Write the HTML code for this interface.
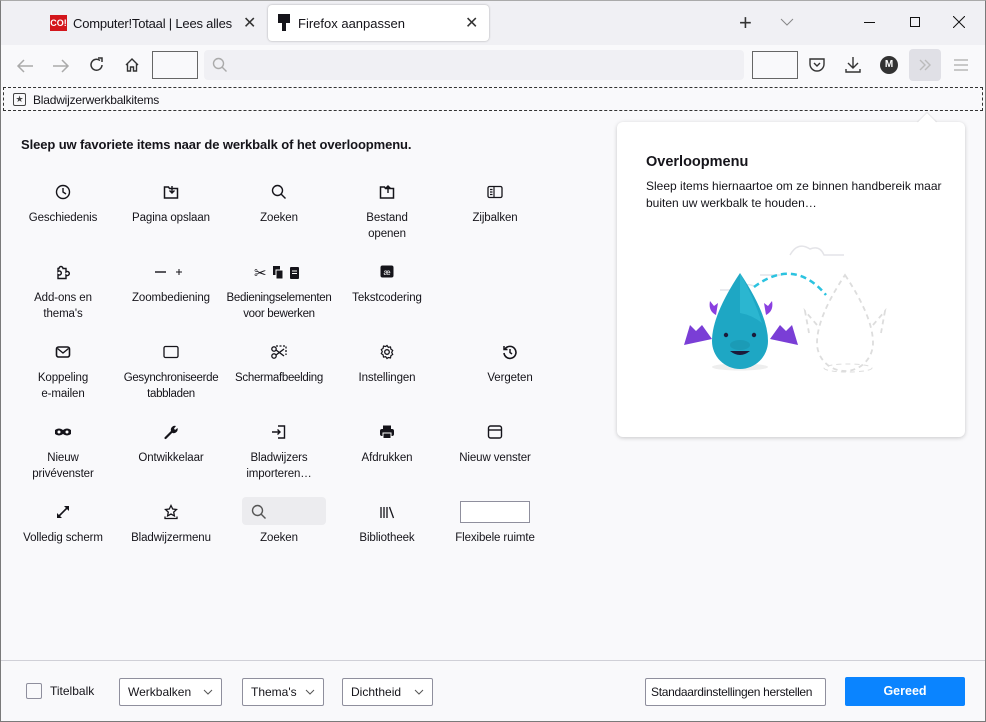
<!DOCTYPE html>
<html><head><meta charset="utf-8">
<style>
*{box-sizing:border-box;margin:0;padding:0}
body{width:986px;height:722px;overflow:hidden;font-family:"Liberation Sans",sans-serif;font-size:12px;color:#15141a;background:#f9f9fb;position:relative}
.abs{position:absolute}
.frame{position:absolute;left:0;top:0;width:986px;height:722px;border:1px solid #7a7a7a;border-top:1px solid #aaa;pointer-events:none}
.tabs{left:0;top:0;width:986px;height:45px;background:#f0f0f4}
.tb{left:0;top:45px;width:986px;height:43px;background:#f9f9fb}
.item{position:absolute;width:108px;text-align:center;line-height:16px;font-size:11.5px;letter-spacing:-0.1px}
.item svg{display:block;margin:0 auto 10px auto}
.btn{position:absolute;top:678px;height:28px;border:1px solid #8f8f9d;background:#fff;border-radius:2px;font-size:12px;line-height:26px;padding-left:8px}
.btn svg{position:absolute;right:8px;top:10px}
</style></head><body>
<div class="abs tabs"></div>
<div class="abs" style="left:50px;top:15px;width:17px;height:16px;background:#d3161c;color:#fff;font-size:9px;font-weight:bold;line-height:16px;text-align:center">CO!</div>
<div class="abs" style="left:73px;top:16px;font-size:13px;width:162px;white-space:nowrap;overflow:hidden;letter-spacing:-0.2px">Computer!Totaal | Lees alles op</div>
<div class="abs" style="left:243px;top:13px;font-size:16px;color:#333">✕</div>
<div class="abs" style="left:268px;top:5px;width:221px;height:36px;background:#fff;border-radius:4px;box-shadow:0 0 2px rgba(0,0,0,.3)"></div>
<svg class="abs" style="left:277px;top:14px" width="14" height="18" viewBox="0 0 14 18"><rect x="1" y="0" width="12" height="9" fill="#15141a"/><rect x="5" y="9" width="4" height="8" fill="#15141a"/></svg>
<div class="abs" style="left:298px;top:16px;font-size:13px">Firefox aanpassen</div>
<div class="abs" style="left:465px;top:13px;font-size:16px;color:#333">✕</div>
<div class="abs" style="left:739px;top:10px;font-size:22px;color:#333;font-weight:300">+</div>
<svg class="abs" style="left:780px;top:18px" width="14" height="8"><path d="M1 1l6 6 6-6" stroke="#888" fill="none"/></svg>
<div class="abs" style="left:864px;top:22px;width:11px;height:1px;background:#111"></div>
<div class="abs" style="left:910px;top:17px;width:10px;height:10px;border:1px solid #111"></div>
<svg class="abs" style="left:953px;top:16px" width="12" height="12"><path d="M0 0l12 12M12 0L0 12" stroke="#111"/></svg>
<div class="abs tb"></div>
<svg class="abs" style="left:16px;top:58px" width="18" height="16"><path d="M17 8H2M8 2L2 8l6 6" stroke="#aaa" stroke-width="1.5" fill="none"/></svg>
<svg class="abs" style="left:52px;top:58px" width="18" height="16"><path d="M1 8h15M10 2l6 6-6 6" stroke="#aaa" stroke-width="1.5" fill="none"/></svg>
<svg class="abs" style="left:89px;top:57px" width="16" height="16"><path d="M13 8A5.5 5.5 0 1 1 11 3.5" stroke="#333" stroke-width="1.5" fill="none"/><path d="M9 1h4v4" stroke="#333" stroke-width="1.5" fill="none"/></svg>
<svg class="abs" style="left:124px;top:57px" width="16" height="16"><path d="M2 8L8 2l6 6M3.5 7v7h3v-4h3v4h3V7" stroke="#333" stroke-width="1.4" fill="none"/></svg>
<div class="abs" style="left:152px;top:51px;width:46px;height:28px;border:1px solid #666;background:#f9f9fb"></div>
<div class="abs" style="left:204px;top:50px;width:540px;height:30px;background:#f0f0f4;border-radius:4px"></div>
<svg class="abs" style="left:212px;top:57px" width="16" height="16"><circle cx="6.5" cy="6.5" r="5" stroke="#aaa" stroke-width="1.4" fill="none"/><path d="M10 10l4.5 4.5" stroke="#aaa" stroke-width="1.4"/></svg>
<div class="abs" style="left:752px;top:51px;width:46px;height:28px;border:1px solid #666;background:#f9f9fb"></div>
<svg class="abs" style="left:808px;top:57px" width="18" height="16"><path d="M2 2h14v5a7 7 0 0 1-14 0z" stroke="#333" stroke-width="1.4" fill="none"/><path d="M6 6l3 3 3-3" stroke="#333" stroke-width="1.4" fill="none"/></svg>
<svg class="abs" style="left:845px;top:56px" width="16" height="18"><path d="M8 1v11M3 7l5 5 5-5M1 13v3h14v-3" stroke="#333" stroke-width="1.4" fill="none"/></svg>
<div class="abs" style="left:880px;top:56px;width:18px;height:18px;border-radius:50%;background:#333;color:#fff;font-size:10px;font-weight:bold;text-align:center;line-height:18px">M</div>
<div class="abs" style="left:909px;top:49px;width:32px;height:32px;background:#e0e0e6;border-radius:4px"></div>
<svg class="abs" style="left:918px;top:59px" width="14" height="12"><path d="M2 1l5 5-5 5M7 1l5 5-5 5" stroke="#bbb" stroke-width="1.4" fill="none"/></svg>
<svg class="abs" style="left:954px;top:58px" width="14" height="14"><path d="M0 2h14M0 7h14M0 12h14" stroke="#aaa" stroke-width="1.2"/></svg>
<div class="abs" style="left:3px;top:87px;width:980px;height:24px;border:1px dashed #333;background:#f9f9fb"></div>
<div class="abs" style="left:13px;top:93px;width:13px;height:13px;border:1.4px solid #444;border-radius:2px;font-size:9px;line-height:10px;text-align:center;color:#444">★</div>
<div class="abs" style="left:33px;top:93px;font-size:12px;letter-spacing:-0.2px">Bladwijzerwerkbalkitems</div>
<div class="abs" style="left:21px;top:137px;font-size:13px;font-weight:bold;color:#15141a;letter-spacing:-0.1px">Sleep uw favoriete items naar de werkbalk of het overloopmenu.</div>

<div class="item" style="left:9px;top:184px"><svg width="16" height="16"><circle cx="8" cy="8" r="6.5" stroke="#15141a" stroke-width="1.4" fill="none"/><path d="M8 4v4l3 2" stroke="#15141a" stroke-width="1.4" fill="none"/></svg>Geschiedenis</div>
<div class="item" style="left:117px;top:184px"><svg width="16" height="16"><path d="M1.5 3h4l1 1.5h8v9.5h-13z" stroke="#15141a" stroke-width="1.5" fill="none"/><path d="M9 2v7M6.5 6.5L9 9l2.5-2.5" stroke="#15141a" stroke-width="1.4" fill="none"/></svg>Pagina opslaan</div>
<div class="item" style="left:225px;top:184px"><svg width="16" height="16"><circle cx="6.5" cy="6.5" r="5" stroke="#15141a" stroke-width="1.4" fill="none"/><path d="M10 10l4.5 4.5" stroke="#15141a" stroke-width="1.4"/></svg>Zoeken</div>
<div class="item" style="left:333px;top:184px"><svg width="16" height="16"><path d="M1.5 3h4l1 1.5h8v9.5h-13z" stroke="#15141a" stroke-width="1.5" fill="none"/><path d="M9 9V2M6.5 4.5L9 2l2.5 2.5" stroke="#15141a" stroke-width="1.4" fill="none"/></svg>Bestand<br>openen</div>
<div class="item" style="left:441px;top:184px"><svg width="16" height="16"><rect x="1" y="2.5" width="14" height="11" rx="1.5" stroke="#15141a" stroke-width="1.3" fill="none"/><path d="M7 3v10M3 5.5h2.5M3 8h2.5M3 10.5h2.5" stroke="#15141a" stroke-width="1.2"/></svg>Zijbalken</div>
<div class="item" style="left:9px;top:264px"><svg width="16" height="16"><path d="M3 14.5h8V11a2 2 0 1 0 0-3V4.5H8a2 2 0 1 0-4 0H3v3a2 2 0 1 1 0 3z" stroke="#15141a" stroke-width="1.4" fill="none"/></svg>Add-ons en<br>thema's</div>
<div class="item" style="left:117px;top:264px"><svg width="40" height="16"><path d="M4 8h11" stroke="#15141a" stroke-width="1.4"/><path d="M25 8h6M28 5v6" stroke="#15141a" stroke-width="1"/></svg>Zoombediening</div>
<div class="item" style="left:215px;top:264px;width:128px;letter-spacing:-0.3px"><svg width="50" height="16"><text x="0" y="14" font-size="15" fill="#15141a" font-family="DejaVu Sans">✂</text><rect x="19" y="2" width="7" height="9" fill="#15141a"/><rect x="22" y="6" width="7" height="9" fill="#15141a" stroke="#fff" stroke-width="1"/><rect x="36" y="3" width="9" height="12" rx="1" fill="#15141a"/><path d="M38 7h5M38 9.5h5" stroke="#fff"/></svg>Bedieningselementen<br>voor bewerken</div>
<div class="item" style="left:333px;top:264px"><svg width="16" height="16"><rect x="1.5" y="1.5" width="13" height="12" rx="2" fill="#15141a"/><text x="8" y="11" font-size="8" fill="#fff" text-anchor="middle">æ</text></svg>Tekstcodering</div>
<div class="item" style="left:9px;top:344px"><svg width="16" height="16"><rect x="1.5" y="3" width="13" height="10" rx="2" stroke="#15141a" stroke-width="1.6" fill="none"/><path d="M2.5 4.5L8 9l5.5-4.5" stroke="#15141a" stroke-width="1.4" fill="none"/></svg>Koppeling<br>e-mailen</div>
<div class="item" style="left:112px;top:344px;width:118px;letter-spacing:-0.3px"><svg width="16" height="16"><rect x="1" y="2.5" width="14" height="11" rx="1.5" stroke="#15141a" stroke-width="1.3" fill="none"/></svg>Gesynchroniseerde<br>tabbladen</div>
<div class="item" style="left:220px;top:344px;width:118px;letter-spacing:-0.3px"><svg width="18" height="16"><path d="M6 2h10v9" stroke="#15141a" stroke-width="1.3" stroke-dasharray="2 1.5" fill="none"/><circle cx="4" cy="12" r="2.2" stroke="#15141a" stroke-width="1.3" fill="none"/><circle cx="4" cy="5" r="2.2" stroke="#15141a" stroke-width="1.3" fill="none"/><path d="M6 6l8 6M6 11l8-6" stroke="#15141a" stroke-width="1.4"/></svg>Schermafbeelding</div>
<div class="item" style="left:333px;top:344px"><svg width="16" height="16"><circle cx="8" cy="8" r="2.3" stroke="#15141a" stroke-width="1.3" fill="none"/><path d="M8 1.5l1.3 1.8 2.2-.4.4 2.2 1.8 1.3-1 2 1 2-1.8 1.3-.4 2.2-2.2-.4L8 14.5l-1.3-1.8-2.2.4-.4-2.2-1.8-1.3 1-2-1-2 1.8-1.3.4-2.2 2.2.4z" stroke="#15141a" stroke-width="1.2" fill="none"/></svg>Instellingen</div>
<div class="item" style="left:456px;top:344px"><svg width="16" height="16"><path d="M3 5A6 6 0 1 1 2 9" stroke="#15141a" stroke-width="1.6" fill="none"/><path d="M2 2v3.5h3.5M8 5v3.5l2 1.5" stroke="#15141a" stroke-width="1.5" fill="none"/></svg>Vergeten</div>
<div class="item" style="left:9px;top:424px"><svg width="18" height="16"><path d="M1 6q4-3 8 0q4-3 8 0v4q-4 3-8 0q-4 3-8 0z" fill="#15141a"/><circle cx="5" cy="8" r="1.5" fill="#fff"/><circle cx="13" cy="8" r="1.5" fill="#fff"/></svg>Nieuw<br>privévenster</div>
<div class="item" style="left:117px;top:424px"><svg width="16" height="16"><path d="M2.5 14L9 7.5" stroke="#15141a" stroke-width="2.2" stroke-linecap="round"/><path d="M8 7a4 4 0 0 1 5-5l-2 2.5 1 1.5 2.5-2a4 4 0 0 1-5 5z" fill="#15141a"/></svg>Ontwikkelaar</div>
<div class="item" style="left:225px;top:424px"><svg width="16" height="16"><path d="M7 2h6.5v12H7" stroke="#15141a" stroke-width="1.4" fill="none"/><path d="M1 8h8M6.5 5.5L9 8l-2.5 2.5" stroke="#15141a" stroke-width="1.4" fill="none"/></svg>Bladwijzers<br>importeren…</div>
<div class="item" style="left:333px;top:424px"><svg width="16" height="16"><rect x="4" y="1.5" width="8" height="4" fill="#15141a"/><rect x="1" y="5" width="14" height="7" rx="2" fill="#15141a"/><rect x="4" y="9" width="8" height="5.5" fill="#15141a" stroke="#fff" stroke-width="1"/></svg>Afdrukken</div>
<div class="item" style="left:441px;top:424px"><svg width="16" height="16"><rect x="1.5" y="2" width="13" height="12" rx="2" stroke="#15141a" stroke-width="1.4" fill="none"/><path d="M1.5 6h13" stroke="#15141a" stroke-width="1.4"/></svg>Nieuw venster</div>
<div class="item" style="left:9px;top:504px"><svg width="16" height="16"><path d="M3 13L13 3" stroke="#15141a" stroke-width="1.6"/><path d="M2 9l0 5 5 0z M14 2l0 5-5-5z" fill="#15141a"/></svg>Volledig scherm</div>
<div class="item" style="left:117px;top:504px"><svg width="16" height="16"><path d="M8 1.5l1.7 3.5 3.8.5-2.8 2.6.7 3.8L8 10l-3.4 1.9.7-3.8L2.5 5.5l3.8-.5z" stroke="#15141a" stroke-width="1.3" fill="none"/><path d="M2 12.5v2h12v-2" stroke="#15141a" stroke-width="1.3" fill="none"/></svg>Bladwijzermenu</div>
<div class="abs" style="left:242px;top:497px;width:84px;height:28px;background:#ececef;border-radius:4px"></div>
<svg class="abs" style="left:251px;top:504px" width="16" height="16"><circle cx="6.5" cy="6.5" r="5" stroke="#555" stroke-width="1.4" fill="none"/><path d="M10 10l4.5 4.5" stroke="#555" stroke-width="1.4"/></svg>
<div class="item" style="left:225px;top:530px">Zoeken</div>
<div class="item" style="left:333px;top:504px"><svg width="16" height="16"><path d="M2 3v11M5 3v11M8 3v11M10.5 3l4 11" stroke="#15141a" stroke-width="1.3"/></svg>Bibliotheek</div>
<div class="abs" style="left:460px;top:501px;width:70px;height:22px;border:1px solid #8f8f9d;background:#fff"></div>
<div class="item" style="left:441px;top:530px">Flexibele ruimte</div>

<div class="abs" style="left:617px;top:122px;width:348px;height:315px;background:#fff;border-radius:6px;box-shadow:0 1px 4px rgba(0,0,0,.2)"></div>
<div class="abs" style="left:920px;top:116px;width:14px;height:14px;background:#fff;transform:rotate(45deg);box-shadow:-1px -1px 1px rgba(0,0,0,.08)"></div>
<div class="abs" style="left:646px;top:154px;font-size:14.5px;font-weight:bold">Overloopmenu</div>
<div class="abs" style="left:646px;top:178px;font-size:12px;line-height:17px;width:300px">Sleep items hiernaartoe om ze binnen handbereik maar buiten uw werkbalk te houden…</div>
<svg class="abs" style="left:670px;top:235px" width="240" height="145" viewBox="0 0 240 145">
<path d="M120 20q8-14 20-6q10-4 14 6h20M50 55h20q4-8 14-4M90 40h22" stroke="#e4e4e8" fill="none" stroke-width="1.5"/>
<ellipse cx="70" cy="132" rx="28" ry="3.5" fill="#eee"/>
<path d="M14 110l6-20 6 6 6-6 10 14z M128 110l-6-20-6 6-6-6-10 14z" fill="#7a3ed6"/>
<path d="M46 80q-8-4-6-14l4 5 4-3z M96 80q8-4 6-14l-4 5-4-3z" fill="#8a3fe0"/>
<path d="M70 38q28 42 28 68a28 28 0 0 1-56 0q0-26 28-68z" fill="#1ea7c4"/>
<path d="M70 38q14 25 22 50q-10-8-22-10z" fill="#33bfd9" opacity=".6"/>
<path d="M60 116q10 8 20 0z" fill="#1b1b3a"/>
<ellipse cx="70" cy="110" rx="10" ry="5" fill="#178fa8" opacity=".5"/>
<circle cx="56" cy="100" r="2.2" fill="#1b1b3a"/><circle cx="84" cy="100" r="2.2" fill="#1b1b3a"/>
<path d="M84 52q40-30 72 8" stroke="#2cc3e0" stroke-width="2.5" stroke-dasharray="6 4" fill="none"/>
<path d="M175 40q28 42 28 68a28 28 0 0 1-56 0q0-26 28-68zM147 90l-12-14 4 22M203 90l12-14-4 22" stroke="#ddd" stroke-width="1.8" stroke-dasharray="5 4" fill="none"/>
<ellipse cx="178" cy="133" rx="24" ry="4" stroke="#ddd" stroke-dasharray="5 4" fill="none"/>
</svg>

<div class="abs" style="left:0;top:660px;width:986px;height:1px;background:#d0d0d7"></div>
<div class="abs" style="left:26px;top:683px;width:16px;height:16px;border:1px solid #8f8f9d;border-radius:2px;background:#f9f9fb"></div>
<div class="abs" style="left:50px;top:684px">Titelbalk</div>
<div class="btn" style="left:119px;width:103px">Werkbalken<svg width="10" height="6"><path d="M1 1l4 4 4-4" stroke="#555" fill="none"/></svg></div>
<div class="btn" style="left:242px;width:82px">Thema's<svg width="10" height="6"><path d="M1 1l4 4 4-4" stroke="#555" fill="none"/></svg></div>
<div class="btn" style="left:342px;width:91px">Dichtheid<svg width="10" height="6"><path d="M1 1l4 4 4-4" stroke="#555" fill="none"/></svg></div>
<div class="btn" style="left:645px;width:181px;padding-left:5px;letter-spacing:-0.3px">Standaardinstellingen herstellen</div>
<div class="abs" style="left:845px;top:677px;width:120px;height:29px;background:#0a84ff;border-radius:2px;color:#fff;font-weight:bold;font-size:12.5px;text-align:center;line-height:29px">Gereed</div>
<div class="frame"></div>
</body></html>
